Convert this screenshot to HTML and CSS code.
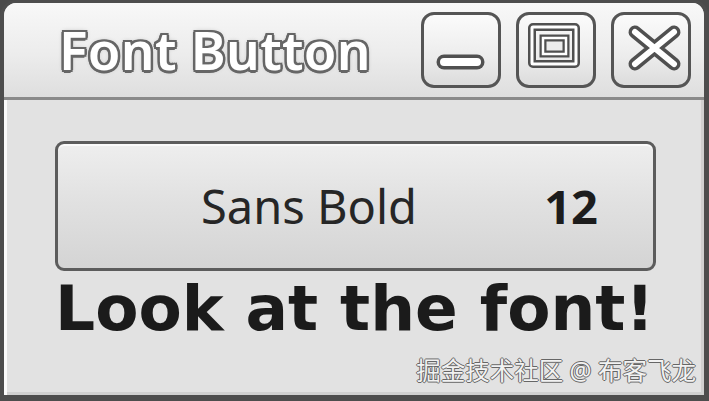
FILE: index.html
```html
<!DOCTYPE html>
<html lang="en">
<head>
    <meta charset="UTF-8">
    <meta name="viewport" content="width=device-width, initial-scale=1.0">
    <title>Font Button</title>
    <link rel="stylesheet" href="styles.css">
</head>
<body>
    <div class="window">
        <div class="titlebar">
            <span class="title">Font Button</span>
            <div class="controls">
                <button class="ctl" aria-label="Minimize">
                    <svg width="80" height="76" viewBox="0 0 80 76">
                        <path d="M23 50 H56" stroke="#505050" stroke-width="15" stroke-linecap="round"/>
                        <path d="M23 50 H56" stroke="#fff" stroke-width="8" stroke-linecap="round"/>
                    </svg>
                </button>
                <button class="ctl" aria-label="Maximize">
                    <svg width="80" height="76" viewBox="0 0 80 76">
                        <rect x="16" y="15" width="44" height="37" rx="1" fill="none" stroke="#505050" stroke-width="8"/>
                        <rect x="16" y="15" width="44" height="37" rx="1" fill="none" stroke="#fff" stroke-width="3"/>
                        <rect x="27" y="26" width="23" height="16" fill="#ececec" stroke="#505050" stroke-width="7"/>
                        <rect x="27" y="26" width="23" height="16" fill="none" stroke="#fff" stroke-width="2.5"/>
                    </svg>
                </button>
                <button class="ctl" aria-label="Close">
                    <svg width="80" height="76" viewBox="0 0 80 76">
                        <path d="M24 20 L63 52 M63 20 L24 52" stroke="#505050" stroke-width="13" stroke-linecap="round"/>
                        <path d="M24 20 L63 52 M63 20 L24 52" stroke="#fff" stroke-width="6" stroke-linecap="round"/>
                    </svg>
                </button>
            </div>
        </div>
        <div class="content">
            <button class="font-button">
                <span class="font-name">Sans Bold</span>
                <span class="font-size">12</span>
            </button>
            <p class="sample">Look at the font!</p>
            <span class="watermark">掘金技术社区 @ 布客飞龙</span>
        </div>
    </div>
</body>
</html>
```

FILE: styles.css
```css
* {
    margin: 0;
    padding: 0;
    box-sizing: border-box;
}

body {
    width: 709px;
    height: 401px;
    background: #4a4a4a;
    overflow: hidden;
}

.window {
    width: 709px;
    height: 401px;
    display: flex;
    flex-direction: column;
    border: 3px solid #4d4d4d;
    border-left-width: 4px;
    border-right-width: 5px;
    border-bottom-width: 6px;
    border-radius: 16px 16px 0 0;
    background: #e2e2e2;
    overflow: hidden;
}

/* Barre de titre */
.titlebar {
    height: 97px;
    display: flex;
    align-items: center;
    padding: 4px 13px 0 55px;
    background: linear-gradient(180deg, #f8f8f8, #ececec 55%, #dedede);
    border-bottom: 3px solid #8a8a8a;
}

.title {
    font-family: 'Noto Sans', sans-serif;
    font-size: 53px;
    font-weight: 600;
    color: #fff;
    letter-spacing: 0.3px;
    text-shadow:
        2.5px 0 0 #666, -2.5px 0 0 #666, 0 2.5px 0 #666, 0 -2.5px 0 #666,
        2px 2px 0 #666, -2px -2px 0 #666, 2px -2px 0 #666, -2px 2px 0 #666,
        0 0 5px #999;
    margin-top: -6px;
}

.controls {
    margin-left: auto;
    display: flex;
    gap: 15px;
    margin-top: -4px;
}

.ctl {
    width: 80px;
    height: 76px;
    border: 3px solid #555;
    border-radius: 13px;
    background: linear-gradient(180deg, #fbfbfb, #ececec 60%, #dcdcdc);
    display: flex;
    align-items: center;
    justify-content: center;
    overflow: hidden;
}

.ctl svg {
    flex: none;
    margin: -3px;
}

/* Zone du contenu */
.content {
    flex: 1;
    position: relative;
    padding: 41px 48px 0 51px;
    box-shadow: inset 3px 0 0 #fbfbfb, inset -3px -3px 0 #d0d0d0;
}

.font-button {
    width: 601px;
    height: 130px;
    display: flex;
    align-items: center;
    padding: 0 55px 0 143px;
    border: 3px solid #5c5c5c;
    border-radius: 9px;
    background: linear-gradient(180deg, #eeeeee, #e0e0e0 50%, #d4d4d4);
    box-shadow: inset 0 2px 0 #fafafa;
    font-family: 'Noto Sans', sans-serif;
    font-size: 47px;
    color: #262626;
}

.font-name {
    font-weight: 400;
}

.font-size {
    margin-left: auto;
    font-weight: 700;
    color: #1c1c1c;
}

.sample {
    margin-top: 6px;
    font-family: 'DejaVu Sans', sans-serif;
    font-weight: 700;
    font-size: 63px;
    line-height: 63px;
    color: #1b1b1b;
}

.watermark {
    position: absolute;
    right: 8px;
    bottom: 8px;
    font-family: 'Noto Sans', 'Noto Sans CJK SC', sans-serif;
    font-size: 24.5px;
    color: #f2f2f2;
    text-shadow:
        1px 0 0 #666, -1px 0 0 #666, 0 1px 0 #666, 0 -1px 0 #666;
}
```
